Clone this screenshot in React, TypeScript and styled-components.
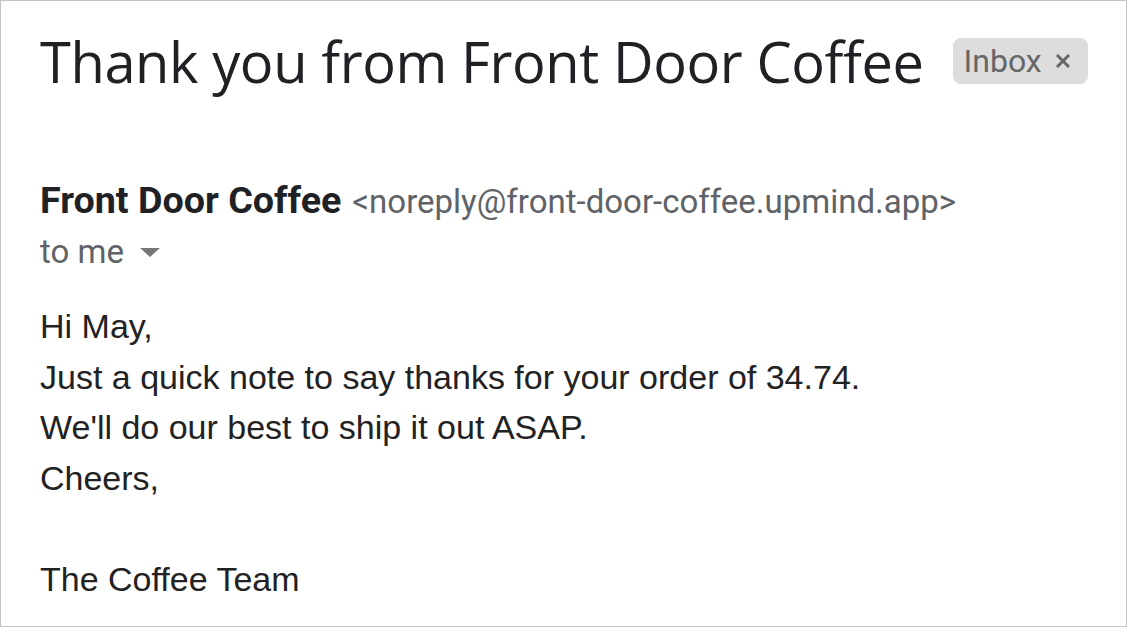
import styled, { createGlobalStyle } from "styled-components";

const GlobalStyle = createGlobalStyle`
  html, body {
    margin: 0;
    padding: 0;
    background: #ffffff;
  }
`;

const Frame = styled.div`
  box-sizing: border-box;
  width: 1127px;
  height: 627px;
  border: 1px solid #c4c4c4;
  background: #fff;
  padding: 20px 30px 0 39px;
  overflow: hidden;
`;

const Header = styled.div`
  display: flex;
  align-items: center;
  gap: 29px;
  white-space: nowrap;
`;

const Subject = styled.h1`
  margin: 0;
  flex-shrink: 0;
  font-family: "Open Sans", "Noto Sans", sans-serif;
  font-weight: 400;
  font-size: 56px;
  line-height: 80px;
  color: #202124;
  letter-spacing: -0.4px;
`;

const Chip = styled.span`
  flex-shrink: 0;
  display: inline-flex;
  align-items: center;
  gap: 12px;
  height: 46px;
  padding: 0 16px 0 11px;
  border-radius: 8px;
  background: #dddddd;
  color: #666666;
  font-family: Roboto, "Liberation Sans", sans-serif;
  font-size: 32px;
`;

const Sender = styled.div`
  margin-top: 76px;
  display: flex;
  align-items: baseline;
  gap: 11px;
  font-family: Roboto, "Liberation Sans", sans-serif;
  line-height: 46px;
  white-space: nowrap;
`;

const Name = styled.span`
  font-weight: 700;
  font-size: 37.7px;
  color: #202124;
`;

const Address = styled.span`
  font-size: 33px;
  color: #5f6368;
`;

const Recipient = styled.div`
  display: flex;
  align-items: center;
  gap: 16px;
  margin-top: 4px;
  font-family: Roboto, "Liberation Sans", sans-serif;
  font-size: 33px;
  line-height: 46px;
  color: #5f6368;
`;

const Body = styled.div`
  margin-top: 26px;
  font-family: "Liberation Sans", Arial, sans-serif;
  font-size: 34px;
  line-height: 50.6px;
  color: #222222;
`;

const Line = styled.div`
  min-height: 50.6px;
`;

function CloseIcon() {
  return (
    <svg width="18" height="18" viewBox="0 0 18 18">
      <path d="M3 3 L15 15 M15 3 L3 15" stroke="#666" strokeWidth="3" />
    </svg>
  );
}

function CaretIcon() {
  return (
    <svg width="20" height="9" viewBox="0 0 20 9">
      <path d="M0 0 L20 0 L10 9 Z" fill="#777" />
    </svg>
  );
}

export default function App() {
  const lines = [
    "Hi May,",
    "Just a quick note to say thanks for your order of 34.74.",
    "We'll do our best to ship it out ASAP.",
    "Cheers,",
    "",
    "The Coffee Team",
  ];
  return (
    <>
      <GlobalStyle />
      <Frame>
        <Header>
          <Subject>Thank you from Front Door Coffee</Subject>
          <Chip>
            Inbox
            <CloseIcon />
          </Chip>
        </Header>
        <Sender>
          <Name>Front Door Coffee</Name>
          <Address>&lt;noreply@front-door-coffee.upmind.app&gt;</Address>
        </Sender>
        <Recipient>
          to me
          <CaretIcon />
        </Recipient>
        <Body>
          {lines.map((l, i) => (
            <Line key={i}>{l}</Line>
          ))}
        </Body>
      </Frame>
    </>
  );
}
